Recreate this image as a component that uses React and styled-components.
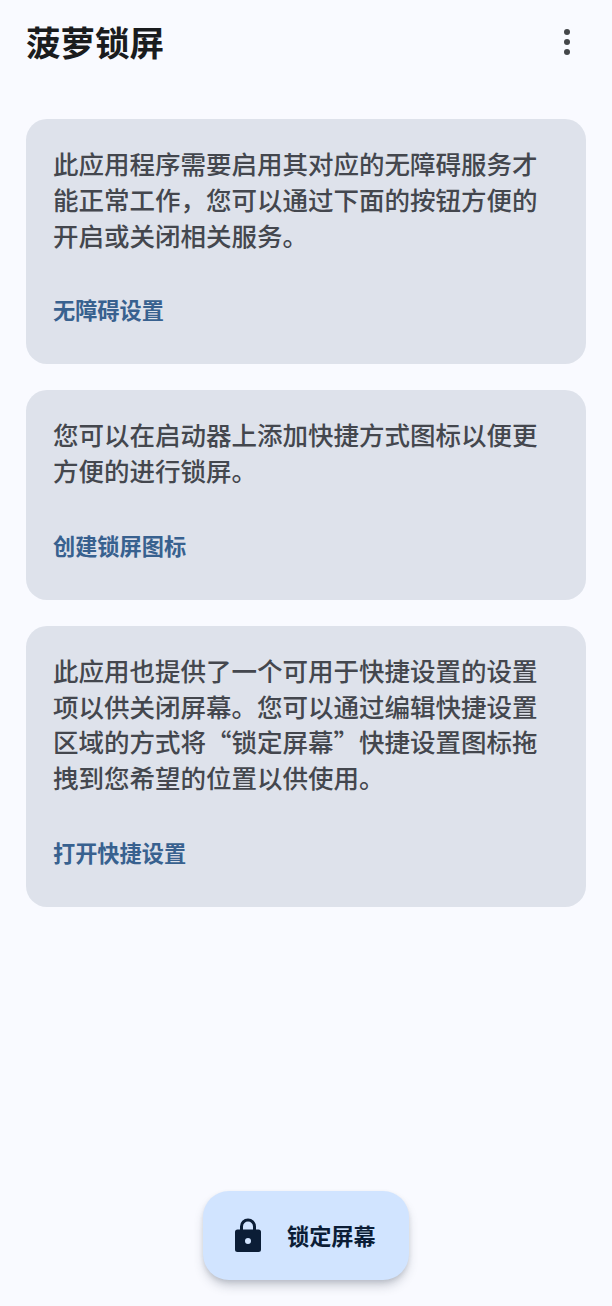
import React from 'react'
import styled, { createGlobalStyle } from 'styled-components'

const cjk = '"Noto Sans CJK SC", "Noto Sans", sans-serif'

const cards = [
  {
    lines: ['此应用程序需要启用其对应的无障碍服务才', '能正常工作，您可以通过下面的按钮方便的', '开启或关闭相关服务。'],
    action: '无障碍设置',
  },
  {
    lines: ['您可以在启动器上添加快捷方式图标以便更', '方便的进行锁屏。'],
    action: '创建锁屏图标',
  },
  {
    lines: ['此应用也提供了一个可用于快捷设置的设置', '项以供关闭屏幕。您可以通过编辑快捷设置', '区域的方式将“锁定屏幕”快捷设置图标拖', '拽到您希望的位置以供使用。'],
    action: '打开快捷设置',
  },
]

function App() {
  return (
    <Page>
      <GlobalStyle />
      <Header>
        <Title>菠萝锁屏</Title>
        <MenuButton aria-label="more">
          <Dot />
          <Dot />
          <Dot />
        </MenuButton>
      </Header>
      <CardList>
        {cards.map((card) => (
          <Card key={card.action}>
            <Body>
              {card.lines.map((line) => (
                <Line key={line}>{line}</Line>
              ))}
            </Body>
            <Action>{card.action}</Action>
          </Card>
        ))}
      </CardList>
      <Fab>
        <svg width="28" height="36" viewBox="0 0 28 36">
          <path
            fill="#0b1d36"
            fillRule="evenodd"
            d="M6 11.5V8.5a8 8 0 0 1 16 0v3h2.5a2.5 2.5 0 0 1 2.5 2.5v17.5a2.5 2.5 0 0 1-2.5 2.5h-21A2.5 2.5 0 0 1 1 31.5V14a2.5 2.5 0 0 1 2.5-2.5H6Zm3 0h10v-3a5 5 0 0 0-10 0v3ZM14 20a3 3 0 1 0 0 6 3 3 0 0 0 0-6Z"
          />
        </svg>
        <FabLabel>锁定屏幕</FabLabel>
      </Fab>
    </Page>
  )
}

const GlobalStyle = createGlobalStyle`
  html, body {
    margin: 0;
    padding: 0;
    background: #f9faff;
  }
`

const Page = styled.div`
  width: 612px;
  height: 1306px;
  display: flex;
  flex-direction: column;
  box-sizing: border-box;
  padding: 0 26px 26px;
  background: #f9faff;
  font-family: ${cjk};
`

const Header = styled.div`
  height: 84px;
  flex-shrink: 0;
  display: flex;
  align-items: center;
  justify-content: space-between;
`

const Title = styled.div`
  font-size: 34.5px;
  line-height: 46px;
  font-weight: 700;
  color: #1a1c1e;
  margin-bottom: 2px;
`

const MenuButton = styled.div`
  display: flex;
  flex-direction: column;
  gap: 4px;
  margin-right: 16px;
`

const Dot = styled.span`
  width: 6px;
  height: 6px;
  border-radius: 50%;
  background: #44474a;
`

const CardList = styled.div`
  margin-top: 35px;
  display: flex;
  flex-direction: column;
  gap: 26px;
`

const Card = styled.div`
  background: #dee2eb;
  border-radius: 21px;
  padding: 26px 27px 39px;
`

const Body = styled.div`
  font-size: 25.5px;
  line-height: 35.75px;
  font-weight: 500;
  color: #44474e;
  white-space: nowrap;
`

const Line = styled.div``

const Action = styled.div`
  margin-top: 41px;
  font-size: 22.2px;
  line-height: 32px;
  font-weight: 700;
  color: #38618f;
`

const Fab = styled.div`
  margin-top: auto;
  align-self: center;
  width: 206px;
  height: 89px;
  box-sizing: border-box;
  padding-left: 31px;
  display: flex;
  align-items: center;
  gap: 25px;
  border-radius: 26px;
  background: #d1e4ff;
  box-shadow: 0 7px 11px -2px rgba(40, 50, 70, 0.26), 0 2px 4px rgba(40, 50, 70, 0.1);
`

const FabLabel = styled.div`
  font-size: 22.2px;
  line-height: 32px;
  font-weight: 700;
  color: #0b1d36;
  margin-bottom: 2px;
`

export default App
